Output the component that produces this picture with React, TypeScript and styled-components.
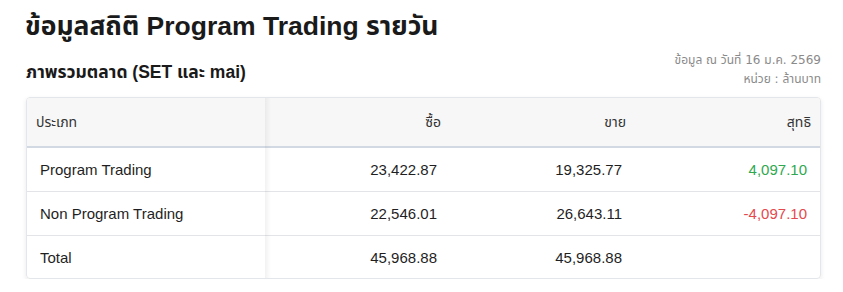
import React from "react";
import styled, { createGlobalStyle } from "styled-components";

const Global = createGlobalStyle`
  html, body { margin: 0; padding: 0; background: #ffffff; }
  body { font-family: "Liberation Sans", "Noto Sans Thai", "Noto Sans", sans-serif; color: #1f1f1f; }
`;

const Page = styled.div`
  padding: 9px 22px 0 26px;
  width: 843px;
  box-sizing: border-box;
`;

const Title = styled.h1`
  margin: 0 0 0 -1px;
  font-size: 26.5px;
  line-height: 34px;
  font-weight: 700;
  color: #1a1a1a;
`;

const HeadRow = styled.div`
  display: flex;
  justify-content: space-between;
  align-items: flex-end;
  margin-top: 8px;
`;

const Subtitle = styled.h2`
  margin: 0 0 6px 0;
  font-size: 17.5px;
  line-height: 22px;
  font-weight: 700;
  color: #1a1a1a;
`;

const Meta = styled.div`
  text-align: right;
  font-family: "DejaVu Sans", "Noto Sans Thai", sans-serif;
  font-size: 12px;
  line-height: 19px;
  color: #8a8a8a;
`;

const Card = styled.div`
  margin-top: 8px;
  border: 1px solid #e3e6ea;
  border-radius: 4px;
  box-shadow: 0 2px 5px rgba(0, 0, 0, 0.09);
  overflow: hidden;
`;

const Table = styled.table`
  width: 100%;
  border-collapse: collapse;
  table-layout: fixed;
`;

const Th = styled.th<{ $first?: boolean }>`
  height: 48px;
  padding: 0 9px;
  background: #f7f7f8;
  border-bottom: 2px solid #d3d9e3;
  font-size: 14px;
  font-weight: 400;
  color: #333;
  text-align: ${(p) => (p.$first ? "left" : "right")};
  position: relative;
  ${(p) =>
    p.$first
      ? `&::after{content:"";position:absolute;top:0;bottom:-2px;right:-6px;width:6px;background:linear-gradient(to right, rgba(0,0,0,0.05), rgba(0,0,0,0));z-index:1;}`
      : ""}
`;

const Td = styled.td<{ $first?: boolean; $tone?: "up" | "down" }>`
  height: 43px;
  padding: 0 13px;
  border-bottom: 1px solid #e2e4e8;
  font-size: 15px;
  color: ${(p) => (p.$tone === "up" ? "#2fa84f" : p.$tone === "down" ? "#e5484d" : "#1f1f1f")};
  text-align: ${(p) => (p.$first ? "left" : "right")};
  position: relative;
  tr:last-child > & { border-bottom: none; height: 42px; }
  ${(p) =>
    p.$first
      ? `&::after{content:"";position:absolute;top:0;bottom:-1px;right:-6px;width:6px;background:linear-gradient(to right, rgba(0,0,0,0.05), rgba(0,0,0,0));z-index:1;}`
      : ""}
`;

const NumCell = styled(Td)`
  padding-right: 13px;
`;

type Row = { name: string; buy: string; sell: string; net: string; tone?: "up" | "down" };

const rows: Row[] = [
  { name: "Program Trading", buy: "23,422.87", sell: "19,325.77", net: "4,097.10", tone: "up" },
  { name: "Non Program Trading", buy: "22,546.01", sell: "26,643.11", net: "-4,097.10", tone: "down" },
  { name: "Total", buy: "45,968.88", sell: "45,968.88", net: "" },
];

export default function App() {
  return (
    <>
      <Global />
      <Page>
        <Title>ข้อมูลสถิติ Program Trading รายวัน</Title>
        <HeadRow>
          <Subtitle>ภาพรวมตลาด (SET และ mai)</Subtitle>
          <Meta>
            <div>ข้อมูล ณ วันที่ 16 ม.ค. 2569</div>
            <div>หน่วย : ล้านบาท</div>
          </Meta>
        </HeadRow>
        <Card>
          <Table>
            <colgroup>
              <col style={{ width: 238 }} />
              <col />
              <col />
              <col />
            </colgroup>
            <thead>
              <tr>
                <Th $first>ประเภท</Th>
                <Th>ซื้อ</Th>
                <Th>ขาย</Th>
                <Th>สุทธิ</Th>
              </tr>
            </thead>
            <tbody>
              {rows.map((r) => (
                <tr key={r.name}>
                  <Td $first>{r.name}</Td>
                  <NumCell>{r.buy}</NumCell>
                  <NumCell>{r.sell}</NumCell>
                  <NumCell $tone={r.tone}>{r.net}</NumCell>
                </tr>
              ))}
            </tbody>
          </Table>
        </Card>
      </Page>
    </>
  );
}
